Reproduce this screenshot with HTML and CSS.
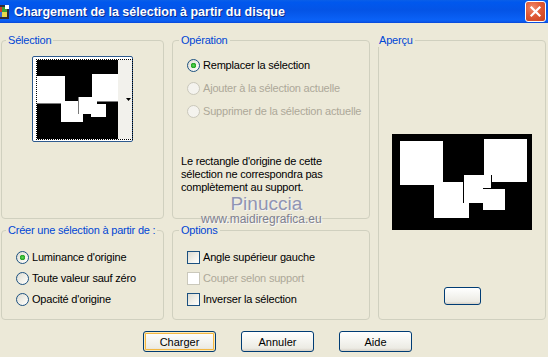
FILE: index.html
```html
<!DOCTYPE html>
<html lang="fr">
<head>
    <meta charset="UTF-8">
    <meta name="viewport" content="width=device-width, initial-scale=1.0">
    <title>Chargement de la sélection à partir du disque</title>
    <link rel="stylesheet" href="styles.css">
</head>
<body>
    <div class="window">
        <header class="titlebar">
            <svg class="app-icon" width="16" height="16" viewBox="0 0 16 16">
                <rect x="1" y="1" width="14" height="14" fill="#2b2b3a"/>
                <rect x="3" y="3" width="5" height="5" fill="#d23a2a"/>
                <rect x="8" y="3" width="5" height="5" fill="#3aa03a"/>
                <rect x="3" y="8" width="5" height="5" fill="#3a66d2"/>
                <rect x="8" y="8" width="5" height="5" fill="#e8d84a"/>
                <rect x="11" y="1" width="4" height="4" fill="#ffffff"/>
            </svg>
            <span class="title">Chargement de la sélection à partir du disque</span>
            <button class="close" aria-label="Fermer">
                <svg width="13" height="13" viewBox="0 0 13 13">
                    <path d="M2.5 2.5 L10.5 10.5 M10.5 2.5 L2.5 10.5" stroke="#fff" stroke-width="2.2" stroke-linecap="square"/>
                </svg>
            </button>
        </header>

        <div class="dialog">
            <div class="groups">
                <fieldset class="group group-selection">
                    <legend>Sélection</legend>
                    <div class="thumb">
                        <div class="thumb-view">
                            <svg width="95" height="79" viewBox="0 0 95 79">
                                <rect x="0" y="0" width="81" height="79" fill="#000"/>
                                <rect x="81" y="0" width="14" height="79" fill="#f2f1ec"/>
                                <rect x="0" y="16" width="28" height="27" fill="#fff"/>
                                <rect x="0" y="43" width="28" height="1" fill="#7a7a7a"/>
                                <rect x="55" y="14" width="26" height="27" fill="#fff"/>
                                <rect x="55" y="41" width="26" height="1" fill="#7a7a7a"/>
                                <rect x="24" y="41" width="22" height="21" fill="#fff"/>
                                <rect x="42" y="37" width="18" height="17" fill="#fff"/>
                                <rect x="41" y="37" width="1" height="17" fill="#7a7a7a"/>
                                <rect x="54" y="44" width="15" height="13" fill="#fff"/>
                                <path d="M89 38 L94 38 L91.5 41 Z" fill="#000"/>
                            </svg>
                        </div>
                    </div>
                </fieldset>

                <fieldset class="group group-operation">
                    <legend>Opération</legend>
                    <div class="choices choices-operation">
                        <label class="choice"><input type="radio" name="op" checked> Remplacer la sélection</label>
                        <label class="choice disabled"><input type="radio" name="op" disabled> Ajouter à la sélection actuelle</label>
                        <label class="choice disabled"><input type="radio" name="op" disabled> Supprimer de la sélection actuelle</label>
                    </div>
                    <p class="note">Le rectangle d'origine de cette sélection ne correspondra pas complètement au support.</p>
                    <div class="watermark">
                        <span class="wm-name">Pinuccia</span>
                        <span class="wm-site">www.maidiregrafica.eu</span>
                    </div>
                </fieldset>

                <fieldset class="group group-preview">
                    <legend>Aperçu</legend>
                    <div class="preview">
                        <svg width="140" height="96" viewBox="0 0 140 96">
                            <rect x="0" y="0" width="140" height="96" fill="#000"/>
                            <rect x="8" y="7" width="43" height="44" fill="#fff"/>
                            <rect x="92" y="5" width="43" height="43" fill="#fff"/>
                            <rect x="42" y="48" width="35" height="36" fill="#fff"/>
                            <rect x="72" y="41" width="27" height="28" fill="#fff"/>
                            <rect x="71" y="41" width="1" height="28" fill="#000"/>
                            <rect x="99" y="41" width="1" height="13" fill="#000"/>
                            <rect x="91" y="54" width="22" height="22" fill="#fff"/>
                            <rect x="91" y="54" width="22" height="1" fill="#000"/>
                        </svg>
                    </div>
                    <button class="btn btn-small" aria-label="Zoom"></button>
                </fieldset>

                <fieldset class="group group-source">
                    <legend>Créer une sélection à partir de :</legend>
                    <div class="choices">
                        <label class="choice"><input type="radio" name="src" checked> Luminance d'origine</label>
                        <label class="choice"><input type="radio" name="src"> Toute valeur sauf zéro</label>
                        <label class="choice"><input type="radio" name="src"> Opacité d'origine</label>
                    </div>
                </fieldset>

                <fieldset class="group group-options">
                    <legend>Options</legend>
                    <div class="choices">
                        <label class="choice"><input type="checkbox"> Angle supérieur gauche</label>
                        <label class="choice disabled"><input type="checkbox" disabled> Couper selon support</label>
                        <label class="choice"><input type="checkbox"> Inverser la sélection</label>
                    </div>
                </fieldset>
            </div>

            <div class="actions">
                <button class="btn btn-default">Charger</button>
                <button class="btn">Annuler</button>
                <button class="btn">Aide</button>
            </div>
        </div>
    </div>
</body>
</html>
```

FILE: styles.css
```css
body {
    margin: 0;
    font-family: "Liberation Sans", Arial, sans-serif;
    font-size: 11px;
    letter-spacing: -0.2px;
    color: #000;
    background-color: #ece9d8;
}

.window {
    width: 548px;
    height: 357px;
    overflow: hidden;
    background-color: #ece9d8;
}

.titlebar {
    display: flex;
    align-items: center;
    height: 23px;
    background: linear-gradient(to bottom, #0a5fe8 0%, #0058ee 10%, #0454e6 45%, #0a61f6 85%, #0b5df0 92%, #0846d8 100%);
}

.app-icon {
    margin-left: -6px;
    flex-shrink: 0;
}

.title {
    margin-left: 4px;
    font-size: 12.5px;
    font-weight: bold;
    letter-spacing: 0;
    color: #fff;
    text-shadow: 1px 1px 0 #0a2a90;
    white-space: nowrap;
}

.close {
    margin-left: auto;
    margin-right: 2px;
    width: 21px;
    height: 21px;
    padding: 0;
    display: flex;
    align-items: center;
    justify-content: center;
    border: 1px solid #fff;
    border-radius: 3px;
    background: radial-gradient(circle at 35% 30%, #f0896a 0%, #e05a36 45%, #c8401d 100%);
    cursor: pointer;
}

.dialog {
    padding: 11px 0 0 1px;
}

.groups {
    display: grid;
    grid-template-columns: 163px 198px 168px;
    grid-template-rows: 185px 96px;
    column-gap: 8px;
    row-gap: 5px;
}

.group {
    margin: 0;
    padding: 0 0 0 8px;
    border: 1px solid #d0d0bf;
    border-radius: 4px;
    min-width: 0;
    position: relative;
}

.group legend {
    padding: 0 2px;
    margin-left: -2px;
    line-height: 13px;
    white-space: nowrap;
    color: #0046d5;
}

.group-selection legend,
.group-source legend {
    margin-left: -4px;
}

.group-preview {
    grid-column: 3;
    grid-row: 1 / span 2;
    display: flex;
    flex-direction: column;
    align-items: center;
    padding: 0;
}

.group-source {
    grid-column: 1;
    grid-row: 2;
}

.group-options {
    grid-column: 2;
    grid-row: 2;
}

/* Selection thumbnail */
.thumb {
    margin: 9px 0 0 22px;
    width: 96px;
    padding: 2px 0 1px 3px;
    border: 1px solid #2e5a8e;
    border-radius: 2px;
    background-color: #fff;
}

.thumb-view {
    display: flex;
    width: 95px;
    height: 79px;
    border: 1px dotted #000;
}

/* Radio / checkbox lists */
.choices {
    display: flex;
    flex-direction: column;
    gap: 8px;
    margin: 14px 0 0 6px;
}

.choices-operation {
    margin-top: 12px;
    gap: 10px;
}

.choice {
    display: flex;
    align-items: center;
    gap: 3px;
    height: 13px;
    line-height: 13px;
    white-space: nowrap;
}

.choice.disabled {
    color: #aca899;
}

.choice input {
    appearance: none;
    -webkit-appearance: none;
    margin: 0;
    width: 13px;
    height: 13px;
    flex-shrink: 0;
    border: 1px solid #1c5180;
    background: linear-gradient(135deg, #dcdbd2 0%, #f2f1ea 55%, #fff 100%);
}

.choice input[type="radio"] {
    border-radius: 50%;
}

.choice input[type="radio"]:checked {
    background:
        radial-gradient(circle at 50% 50%, #5bd856 0%, #23a223 2.5px, transparent 3px),
        linear-gradient(135deg, #dcdbd2 0%, #f2f1ea 55%, #fff 100%);
}

.choice input:disabled {
    border-color: #cac8bb;
    background: #f4f3ee;
}

.choice input[type="checkbox"]:disabled {
    background: #fff;
}

.note {
    margin: 37px 0 0 0;
    line-height: 13px;
    width: 175px;
}

.watermark {
    position: absolute;
    left: 28px;
    top: 147px;
    display: flex;
    flex-direction: column;
    align-items: center;
    letter-spacing: 0;
    pointer-events: none;
}

.wm-name {
    margin-left: 10px;
    font-size: 19px;
    line-height: 19px;
    color: #9094b2;
    text-shadow: 1px 1px 0 #f4f4f4;
}

.wm-site {
    font-size: 12px;
    line-height: 12px;
    color: #7e808e;
    text-shadow: 1px 1px 0 #f8f8f8;
}

/* Preview */
.preview {
    display: flex;
    margin-top: 87px;
}

/* Buttons */
.btn {
    font-family: "Liberation Sans", Arial, sans-serif;
    font-size: 11px;
    color: #000;
    width: 73px;
    height: 21px;
    padding: 0;
    border: 1px solid #003c74;
    border-radius: 3px;
    background: linear-gradient(to bottom, #ffffff 0%, #f6f6f2 40%, #ecebe4 85%, #d6d0c5 100%);
    cursor: pointer;
}

.btn-default {
    box-shadow: inset 0 0 0 1px #fce9b8, inset 0 0 0 2px #f3b843;
}

.btn-small {
    width: 37px;
    height: 18px;
    margin-top: 57px;
}

.actions {
    display: flex;
    gap: 25px;
    margin: 11px 0 0 142px;
}
```
